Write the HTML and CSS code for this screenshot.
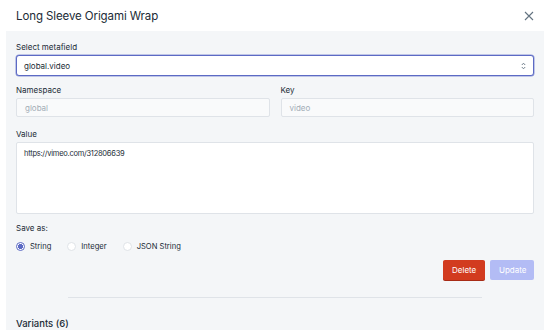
FILE: index.html
```html
<!DOCTYPE html>
<html lang="en">
<head>
    <meta charset="UTF-8">
    <meta name="viewport" content="width=device-width, initial-scale=1.0">
    <title>Metafields</title>
    <link rel="stylesheet" href="styles.css">
</head>
<body>

    <div class="modal">
        <header class="modal-header">
            <h1>Long Sleeve Origami Wrap</h1>
            <button class="close" aria-label="Close">
                <svg width="10" height="10" viewBox="0 0 10 10">
                    <path d="M1 1 L9 9 M9 1 L1 9" stroke="#637381" stroke-width="1.1" fill="none"/>
                </svg>
            </button>
        </header>

        <section class="panel">
            <div class="field">
                <label>Select metafield</label>
                <div class="select">
                    <span>global.video</span>
                    <svg width="5" height="8" viewBox="0 0 5 8">
                        <path d="M0.8 3 L2.5 1.2 L4.2 3 M0.8 5 L2.5 6.8 L4.2 5" stroke="#637381" stroke-width="0.9" fill="none"/>
                    </svg>
                </div>
            </div>

            <div class="field-row">
                <div class="field">
                    <label>Namespace</label>
                    <div class="input disabled">global</div>
                </div>
                <div class="field">
                    <label>Key</label>
                    <div class="input disabled">video</div>
                </div>
            </div>

            <div class="field">
                <label>Value</label>
                <div class="textarea">https://vimeo.com/312806639</div>
            </div>

            <div class="field">
                <label>Save as:</label>
                <div class="radios">
                    <span class="radio checked">String</span>
                    <span class="radio">Integer</span>
                    <span class="radio">JSON String</span>
                </div>
            </div>

            <div class="actions">
                <button class="btn btn-delete">Delete</button>
                <button class="btn btn-update">Update</button>
            </div>

            <hr class="divider">

            <h2>Variants (6)</h2>
        </section>
    </div>

</body>
</html>
```

FILE: styles.css
```css
/* Metafield editor modal */
body {
    margin: 0;
    padding: 0;
    background: #fff;
    font-family: Inter, "Noto Sans", Arial, sans-serif;
    color: #212b36;
}

.modal {
    width: 558px;
    height: 335px;
    overflow: hidden;
}

.modal-header {
    display: flex;
    align-items: center;
    justify-content: space-between;
    height: 31px;
    padding: 0 24px 0 16px;
    box-sizing: border-box;
}

.modal-header h1 {
    margin: 0;
    font-size: 11.5px;
    font-weight: 400;
    letter-spacing: -0.1px;
}

.close {
    border: 0;
    background: none;
    padding: 0;
    width: 10px;
    height: 10px;
    display: flex;
}

.panel {
    margin-left: 6px;
    width: 538px;
    box-sizing: border-box;
    background: #f4f6f8;
    padding: 11px 10px 0 10px;
    height: 299px;
}

.field {
    margin-bottom: 9px;
}

.field label {
    display: block;
    font-size: 8px;
    line-height: 11px;
    margin-bottom: 2px;
    color: #212b36;
}

.select {
    height: 21px;
    box-sizing: border-box;
    border: 1px solid #5c6ac4;
    border-radius: 3px;
    background: #fff;
    box-shadow: 0 0 0 0.5px #8a94d6;
    display: flex;
    align-items: center;
    justify-content: space-between;
    padding: 0 7px 0 7px;
    font-size: 8px;
}

.field-row {
    display: grid;
    grid-template-columns: 1fr 1fr;
    gap: 11px;
    margin-bottom: 3px;
}

.input {
    height: 19px;
    box-sizing: border-box;
    border: 1px solid #dfe3e8;
    border-radius: 2px;
    padding: 0 8px;
    display: flex;
    align-items: center;
    font-size: 8px;
}

.input.disabled {
    background: #f9fafb;
    color: #a3adb7;
}

.textarea {
    height: 72px;
    box-sizing: border-box;
    border: 1px solid #dfe3e8;
    border-radius: 2px;
    background: #fff;
    padding: 6px 7px;
    font-size: 7.5px;
    letter-spacing: -0.25px;
}

.radios {
    display: flex;
    gap: 16px;
    margin-top: 8px;
}

.radio {
    display: flex;
    align-items: center;
    font-size: 7.6px;
    color: #212b36;
}

.radio::before {
    content: "";
    width: 9px;
    height: 9px;
    box-sizing: border-box;
    border: 1px solid #dfe3e8;
    border-radius: 50%;
    background: #fff;
    margin-right: 5px;
}

.radio.checked::before {
    border-color: #5c6ac4;
    background: radial-gradient(circle, #5c6ac4 0 2.3px, #fff 2.8px);
}

.actions {
    display: flex;
    justify-content: flex-end;
    gap: 5px;
    margin-top: 4px;
}

.btn {
    height: 20px;
    border: 0;
    border-radius: 2px;
    padding: 0 9px;
    font-family: inherit;
    font-size: 8px;
    color: #fff;
}

.btn-delete {
    background: #d23b1f;
    box-shadow: 0 1px 0 #a72b16;
    width: 42px;
}

.btn-update {
    background: #b3bcf5;
    width: 44px;
}

.divider {
    width: 80%;
    border: 0;
    border-top: 1px solid #dfe3e8;
    margin: 17px auto 0;
}

.panel h2 {
    margin: 20px 0 0;
    font-size: 9.5px;
    font-weight: 500;
}
```
